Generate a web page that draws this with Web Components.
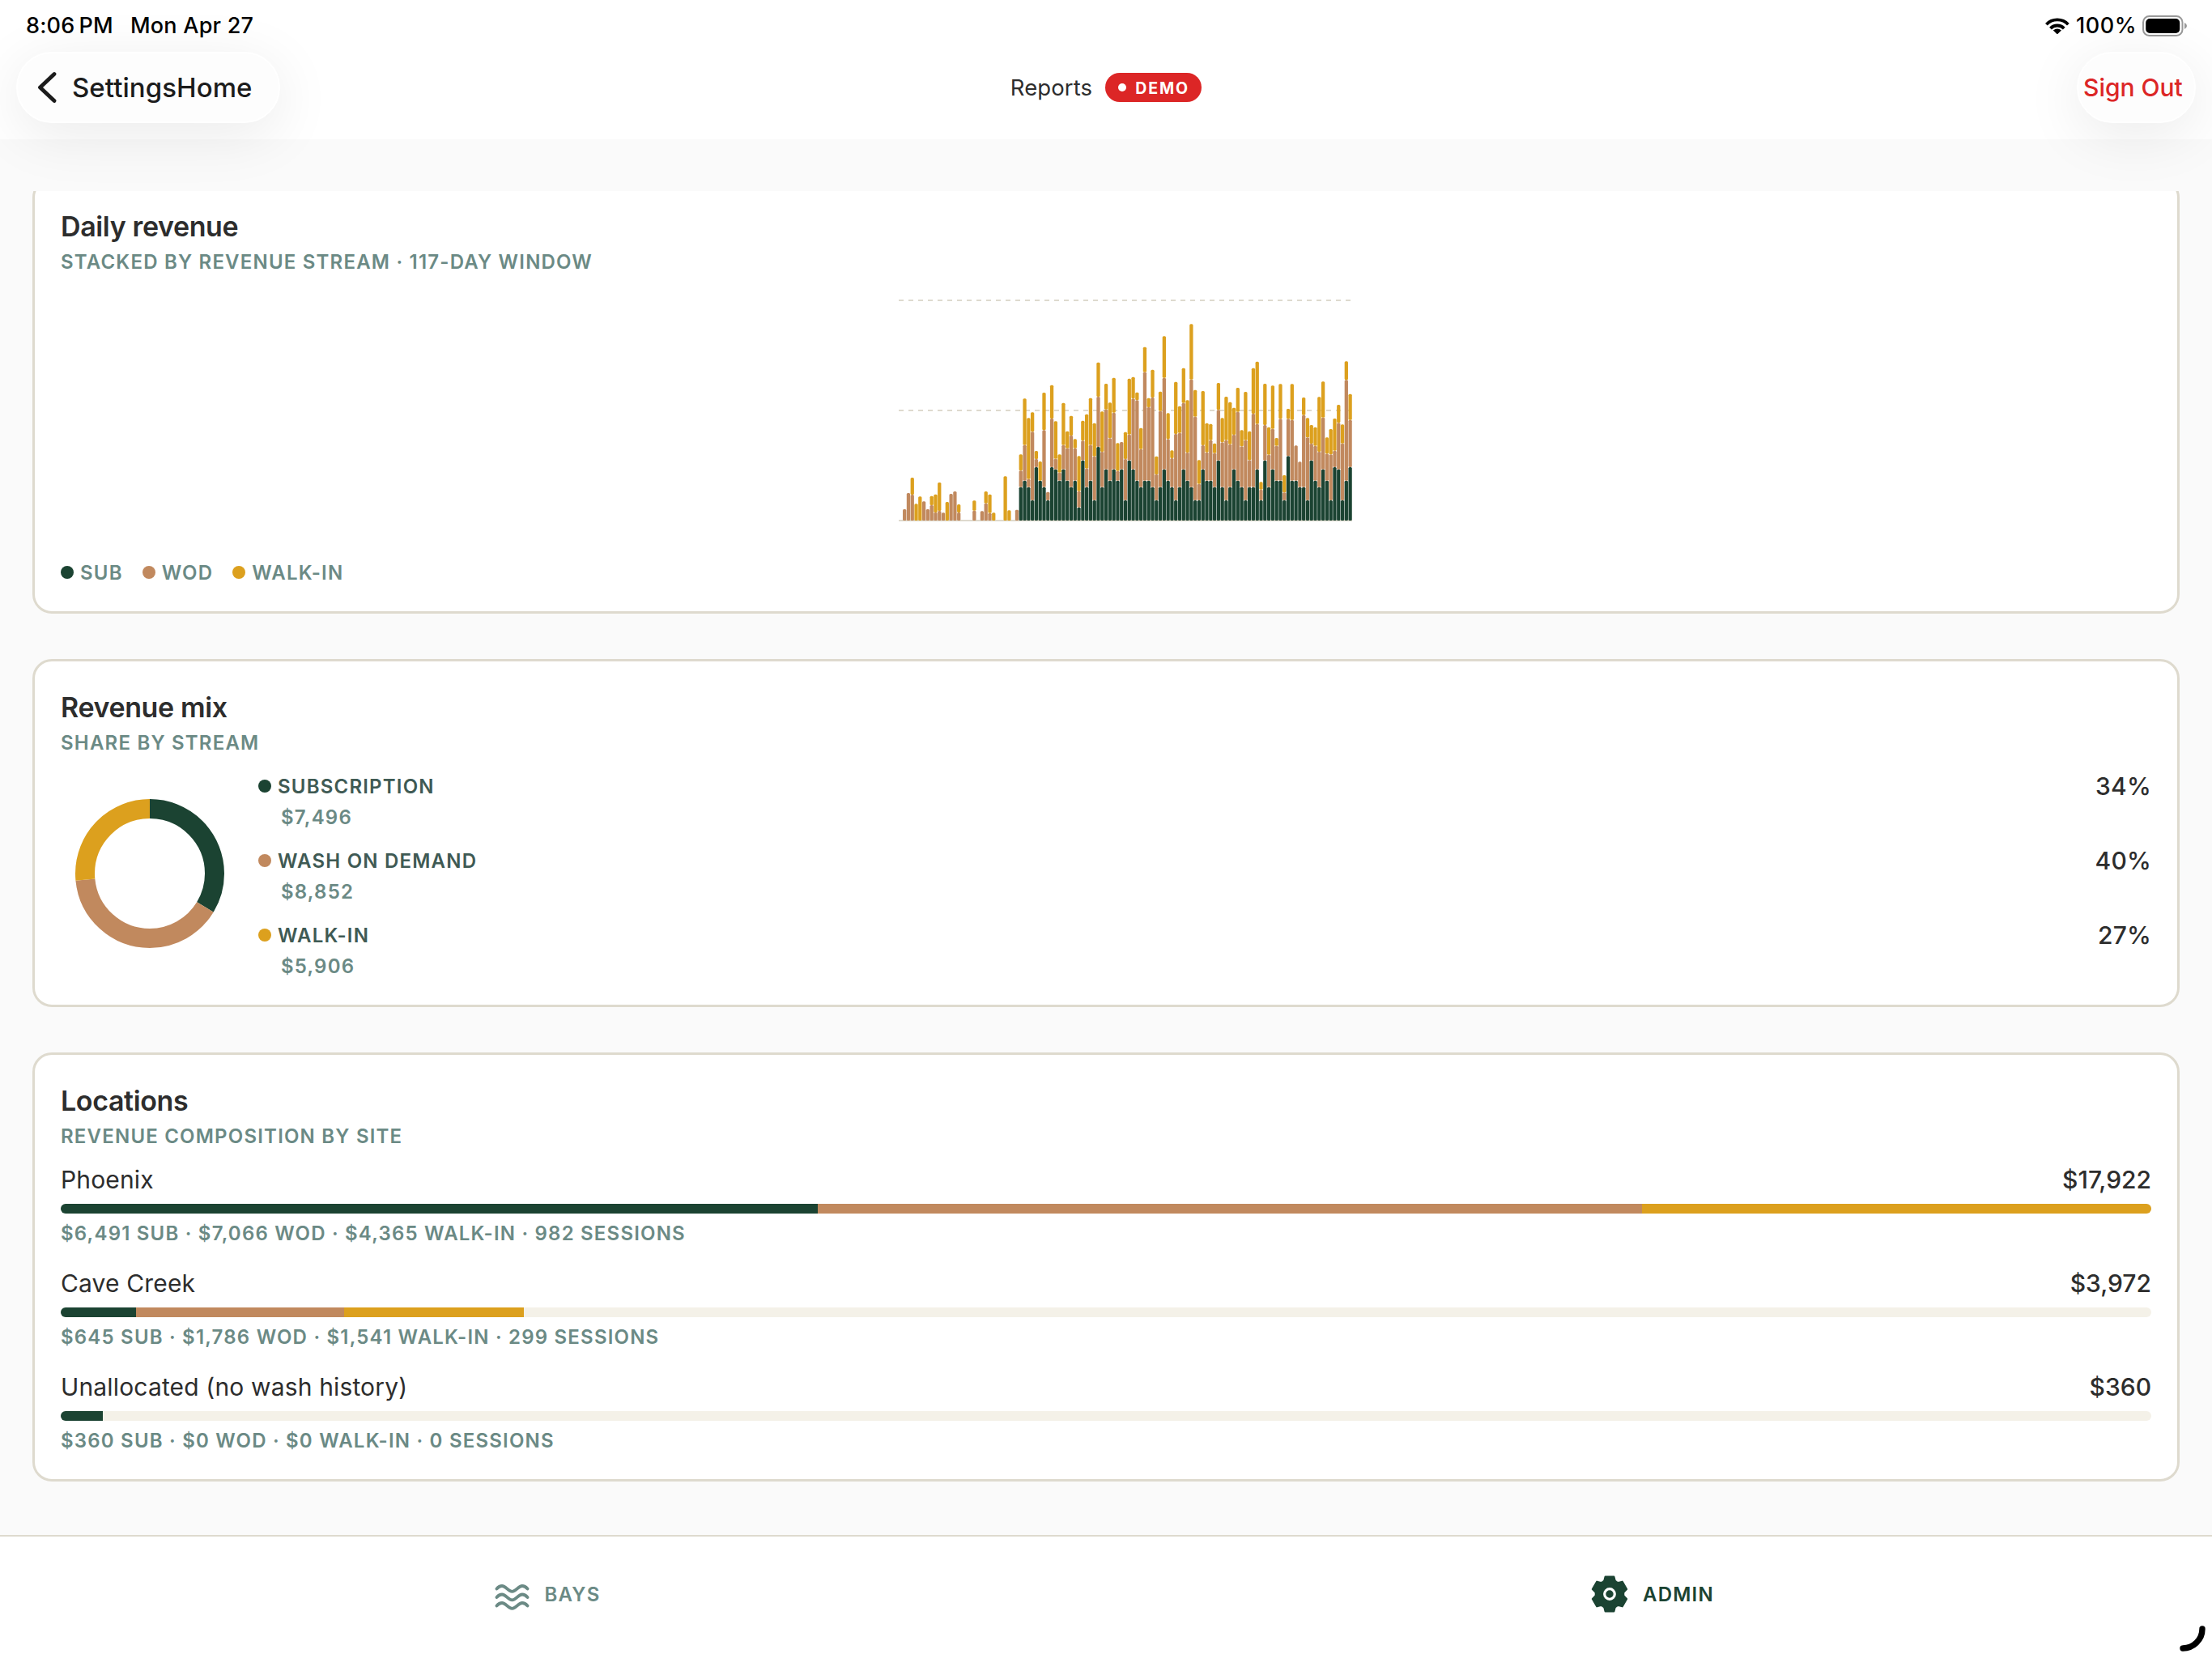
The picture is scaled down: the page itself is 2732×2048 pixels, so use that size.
<!DOCTYPE html>
<html lang="en">
<head>
<meta charset="utf-8">
<title>Reports</title>
<style>
  html, body { margin: 0; height: 100%; }
  body {
    font-family: Inter, "Liberation Sans", sans-serif;
    background: #fafafa;
    color: #2d2d2d;
    overflow: hidden;
    --sub: #1b4332;
    --wod: #c1895e;
    --walk: #dca01e;
    --line: #dedace;
    --muted: #6b8a85;
  }
</style>
</head>
<body>
<reports-app></reports-app>

<script>
const define = (name, html, setup) => {
  const template = document.createElement('template');
  template.innerHTML = html;
  customElements.define(name, class extends HTMLElement {
    constructor() {
      super();
      this.attachShadow({ mode: 'open' }).appendChild(template.content.cloneNode(true));
    }
    connectedCallback() {
      if (setup) setup(this, this.shadowRoot);
    }
  });
};

define('status-bar', `
  <style>
    :host {
      display: flex;
      justify-content: space-between;
      height: 64px;
      box-sizing: border-box;
      padding: 16px 30px 0 32px;
      font-size: 27px;
      line-height: 32px;
      font-weight: 500;
      color: #000;
    }
    .side { display: flex; }
    .time { letter-spacing: 0.2px; }
    .date { margin-left: 21px; letter-spacing: 0.25px; }
    .wifi { margin: 6px 8px 0 0; }
    .percent { letter-spacing: 0.5px; }
    .battery { margin: 3px 0 0 7px; }
    svg { display: block; }
  </style>
  <div class="side"><span class="time">8:06&#8202;&#8202;PM</span><span class="date">Mon Apr 27</span></div>
  <div class="side">
    <svg class="wifi" width="30" height="20" viewBox="0 0 30 20" fill="none" stroke="#000" stroke-width="3.8">
      <path d="M1.4 8.2A18.6 18.6 0 0 1 28.4 8.2"/>
      <path d="M6.5 13.1A11.6 11.6 0 0 1 23.3 13.1"/>
      <path d="M9.8 15.6Q14.9 11.6 20 15.6L14.9 20.4Z" fill="#000" stroke="none"/>
    </svg>
    <span class="percent">100%</span>
    <svg class="battery" width="56" height="26" viewBox="0 0 56 26">
      <rect x="1" y="1" width="48.5" height="24" rx="7.5" fill="none" stroke="#999" stroke-width="2"/>
      <rect x="4.2" y="4" width="42" height="18" rx="5" fill="#000"/>
      <path d="M52 9Q55 10.5 55 13Q55 15.500 52 17Z" fill="#999"/>
    </svg>
  </div>
`);

define('pill-button', `
  <style>
    :host {
      display: flex;
      align-items: center;
      height: 88px;
      box-sizing: border-box;
      border: 2px solid #fff;
      border-radius: 44px;
      background: #fdfdfd;
      box-shadow: 0 14px 72px rgba(0, 0, 0, 0.085);
      font-weight: 500;
      white-space: nowrap;
    }
  </style>
  <slot></slot>
`);

define('demo-badge', `
  <style>
    :host {
      display: flex;
      align-items: center;
      gap: 11px;
      height: 36px;
      width: 119px;
      box-sizing: border-box;
      padding-left: 16px;
      border-radius: 18px;
      background: #dc2626;
      color: #fff;
      font-size: 19.5px;
      line-height: 36px;
      font-weight: 650;
      letter-spacing: 1.9px;
    }
    i { width: 10px; height: 10px; border-radius: 50%; background: #fff; }
    span { padding-top: 1px; }
  </style>
  <i></i><span><slot></slot></span>
`);

define('nav-bar', `
  <style>
    :host {
      display: grid;
      grid-template-columns: 1fr auto 1fr;
      height: 108px;
      box-sizing: border-box;
      padding: 0 20px 20px;
    }
    .back { justify-self: start; width: 326px; padding-left: 24px; font-size: 33px; letter-spacing: 0.05px; color: #1c1c1c; }
    .back svg { margin-right: 19px; }
    .title { display: flex; align-items: center; gap: 16px; font-size: 27.5px; letter-spacing: 0.1px; }
    .out { justify-self: end; width: 147px; padding-left: 6px; font-size: 30px; color: #dc2626; }
  </style>
  <pill-button class="back">
    <svg width="24" height="40" viewBox="0 0 24 40" fill="none" stroke="#1c1c1c" stroke-width="4.8" stroke-linecap="round" stroke-linejoin="round">
      <path d="M21 3.500L3.500 20L21 36.500"/>
    </svg>
    <span>SettingsHome</span>
  </pill-button>
  <div class="title"><span>Reports</span><demo-badge>DEMO</demo-badge></div>
  <pill-button class="out"><span>Sign Out</span></pill-button>
`);

define('report-card', `
  <style>
    :host {
      display: block;
      box-sizing: border-box;
      padding: 32px;
      border: 3px solid var(--line);
      border-radius: 24px;
      background: #fff;
    }
    h2 { margin: 0; font-size: 34px; line-height: 50px; font-weight: 600; letter-spacing: -0.37px; }
    p {
      margin: 0;
      height: 36px;
      font-size: 24px;
      line-height: 38px;
      font-weight: 600;
      letter-spacing: 1.2px;
      text-transform: uppercase;
      color: var(--muted);
    }
  </style>
  <h2></h2><p></p>
  <slot></slot>
`, (el, root) => {
  root.querySelector('h2').textContent = el.getAttribute('heading');
  root.querySelector('p').textContent = el.getAttribute('caption');
});

define('color-key', `
  <style>
    :host {
      display: flex;
      align-items: center;
      gap: 8px;
      height: 32px;
      font-size: 24px;
      line-height: 32px;
      font-weight: 600;
      letter-spacing: 1.2px;
      color: var(--muted);
    }
    i { width: 16px; height: 16px; border-radius: 50%; background: var(--key); }
    span { padding-top: 2px; }
  </style>
  <i></i><span><slot></slot></span>
`);

// Tops of the stacked segments [sub, wod, walk-in] for each day, in chart
// units: 816 is the baseline, 0 the upper grid line. 0 = no segment.
const DAYS = [
  [0,0,0],[0,774,0],[0,714,0],[0,720,657],[0,0,754],[0,0,727],[0,745,0],[0,774,0],[0,759,725],[0,786,719],
  [0,780,675],[0,787,0],[0,0,747],[0,717,0],[0,708,0],[0,786,756],[0,0,0],[0,0,0],[0,0,0],[0,779,742],
  [0,0,0],[0,781,0],[0,752,708],[0,788,719],[0,0,787],[0,0,0],[0,0,0],[0,0,652],[0,0,778],[0,0,0],
  [0,776,0],[692,631,571],[668,536,364],[692,662,436],[741,487,415],[618,588,558],[668,0,597],[692,481,342],[741,710,0],[618,438,314],
  [626,587,448],[668,638,571],[626,536,380],[668,548,485],[692,501,428],[668,548,514],[767,707,577],[593,520,446],[692,623,422],[668,536,362],
  [741,578,455],[543,357,230],[692,561,412],[626,404,309],[668,511,379],[626,416,287],[668,632,529],[626,525,0],[741,588,488],[593,497,290],
  [626,364,284],[668,370,341],[692,551,473],[668,266,173],[668,396,362],[692,360,257],[741,645,578],[692,410,338],[626,287,133],[668,514,418],
  [692,585,556],[741,495,302],[692,491,392],[626,380,251],[668,564,370],[692,293,88],[741,431,332],[741,680,592],[626,537,336],[668,563,455],
  [668,518,458],[692,566,530],[593,406,306],[692,526,436],[741,518,357],[692,533,377],[626,498,398],[668,413,324],[692,541,481],[741,518,339],
  [692,592,485],[692,420,251],[626,458,227],[741,701,673],[593,462,309],[692,572,470],[626,476,316],[668,539,510],[668,439,310],[741,712,648],
  [577,439,402],[668,443,310],[668,538,0],[692,598,0],[692,425,360],[741,508,436],[593,531,462],[668,539,470],[692,561,358],[626,434,301],
  [668,568,508],[741,571,477],[618,557,438],[626,454,387],[741,530,460],[668,295,226],[618,443,347]
];

define('daily-chart', `
  <style>
    :host { display: flex; justify-content: center; height: 350px; }
    .sub { fill: var(--sub); }
    .wod { fill: var(--wod); }
    .walk { fill: var(--walk); }
    .grid { stroke: var(--line); stroke-width: 2; }
  </style>
  <svg width="608" height="350" viewBox="0 0 608 350">
    <g class="grid">
      <path d="M48 30H608M48 166H608" stroke-dasharray="6 6"/>
      <path d="M48 302H608"/>
    </g>
    <g id="bars"></g>
  </svg>
`, (el, root) => {
  const slot = 560 / DAYS.length;
  const width = 4.3;
  let bars = '';
  DAYS.forEach((tops, i) => {
    const x = 48 + i * slot + (slot - width) / 2;
    let bottom = 302;
    ['sub', 'wod', 'walk'].forEach((name, n) => {
      if (!tops[n]) return;
      const top = 30 + tops[n] / 3;
      bars += `<rect class="${name}" x="${x.toFixed(2)}" y="${top.toFixed(2)}" width="${width}" height="${(bottom - top).toFixed(2)}" rx="1.5"/>`;
      bottom = top;
    });
  });
  root.querySelector('#bars').innerHTML = bars;
});

define('mix-donut', `
  <style>
    :host { display: block; }
    svg { display: block; }
    circle { fill: none; stroke-width: 24; }
  </style>
  <svg width="220" height="220" viewBox="-110 -110 220 220"><g transform="rotate(-90)"></g></svg>
`, (el, root) => {
  const parts = [['sub', 7496], ['wod', 8852], ['walk', 5906]];
  const total = parts.reduce((sum, part) => sum + part[1], 0);
  let offset = 0;
  root.querySelector('g').innerHTML = parts.map(([name, value]) => {
    const share = value / total * 100;
    const arc = `<circle r="80" pathLength="100" style="stroke: var(--${name})" stroke-dasharray="${share} 100" stroke-dashoffset="${-offset}"/>`;
    offset += share;
    return arc;
  }).join('');
});

define('mix-row', `
  <style>
    :host { display: block; }
    .top { display: flex; align-items: center; justify-content: space-between; height: 44px; line-height: 44px; }
    color-key { color: #3f5a54; }
    .share { font-size: 30px; font-weight: 500; letter-spacing: 0.2px; }
    .amount {
      height: 32px;
      padding-left: 28px;
      font-size: 24px;
      line-height: 34px;
      font-weight: 600;
      letter-spacing: 1.2px;
      color: var(--muted);
    }
  </style>
  <div class="top"><color-key><slot></slot></color-key><span class="share"></span></div>
  <div class="amount"></div>
`, (el, root) => {
  root.querySelector('.share').textContent = el.getAttribute('share');
  root.querySelector('.amount').textContent = el.getAttribute('amount');
});

define('location-row', `
  <style>
    :host { display: block; }
    .top { display: flex; justify-content: space-between; font-size: 30px; line-height: 44px; }
    .name { letter-spacing: 0.15px; }
    .total { font-weight: 500; }
    .track { display: flex; height: 12px; margin: 8px 0; border-radius: 6px; overflow: hidden; background: #f4f1e8; }
    .detail {
      height: 32px;
      font-size: 24px;
      line-height: 34px;
      font-weight: 600;
      letter-spacing: 1.2px;
      color: var(--muted);
    }
  </style>
  <div class="top"><span class="name"><slot></slot></span><span class="total"></span></div>
  <div class="track"></div>
  <div class="detail"></div>
`, (el, root) => {
  const money = n => '$' + n.toLocaleString('en-US');
  const [sub, wod, walk] = ['sub', 'wod', 'walk'].map(name => Number(el.getAttribute(name)));
  root.querySelector('.total').textContent = money(sub + wod + walk);
  root.querySelector('.track').innerHTML = [['sub', sub], ['wod', wod], ['walk', walk]]
    .map(([name, value]) => `<div style="width: ${value / 17922 * 100}%; background: var(--${name})"></div>`).join('');
  root.querySelector('.detail').textContent =
    `${money(sub)} SUB · ${money(wod)} WOD · ${money(walk)} WALK-IN · ${el.getAttribute('sessions')} SESSIONS`;
});

define('tab-item', `
  <style>
    :host {
      flex: 1;
      display: flex;
      align-items: center;
      justify-content: center;
      gap: 13px;
      padding-right: 21px;
      font-size: 24px;
      line-height: 32px;
      font-weight: 600;
      letter-spacing: 1.2px;
    }
    .icon { display: flex; justify-content: center; width: 56px; }
    .label { padding-top: 2px; }
  </style>
  <span class="icon"><slot name="icon"></slot></span><span class="label"><slot></slot></span>
`);

define('tab-bar', `
  <style>
    :host {
      display: flex;
      height: 152px;
      box-sizing: border-box;
      padding-bottom: 8px;
      border-top: 2px solid var(--line);
      background: #fff;
    }
    .bays { color: var(--muted); }
    .admin { color: var(--sub); }
    svg { display: block; }
    .bays svg { padding-top: 7px; }
  </style>
  <tab-item class="bays">
    <svg slot="icon" width="44" height="36" viewBox="0 0 44 36" fill="none" stroke="currentColor" stroke-width="3.8" stroke-linecap="round">
      <path d="M3.500 7.500C5.500 5.200 7.500 4 10 4C15 4 17.500 10.800 22.500 10.800S30 4 35 4C37.500 4 39.500 5.200 41.500 7.500"/>
      <path d="M3.500 18C5.500 15.700 7.500 14.500 10 14.500C15 14.500 17.500 21.300 22.500 21.300S30 14.500 35 14.500C37.500 14.500 39.500 15.700 41.500 18"/>
      <path d="M3.500 28.500C5.500 26.200 7.500 25 10 25C15 25 17.500 31.800 22.500 31.800S30 25 35 25C37.500 25 39.500 26.200 41.500 28.500"/>
    </svg>
    BAYS
  </tab-item>
  <tab-item class="admin">
    <svg slot="icon" width="48" height="48" viewBox="-24 -24 48 48">
      <polygon id="gear" fill="currentColor" stroke="currentColor" stroke-width="2.400" stroke-linejoin="round"/>
      <circle r="6.300" fill="none" stroke="#fff" stroke-width="3.200"/>
    </svg>
    ADMIN
  </tab-item>
`, (el, root) => {
  const tooth = [[-6.6, -16.2], [-5.3, -21.2], [5.3, -21.2], [6.6, -16.2], [8.5, -14.7]];
  const points = [];
  for (let i = 0; i < 6; i++) {
    const a = i * Math.PI / 3;
    tooth.forEach(([x, y]) => {
      points.push(`${(x * Math.cos(a) - y * Math.sin(a)).toFixed(2)},${(x * Math.sin(a) + y * Math.cos(a)).toFixed(2)}`);
    });
  }
  root.querySelector('#gear').setAttribute('points', points.join(' '));
});

define('reports-app', `
  <style>
    :host { display: flex; flex-direction: column; height: 2048px; }
    header { height: 172px; background: #fff; margin-bottom: 64px; }
    main {
      flex: 1;
      min-height: 0;
      overflow: hidden;
      display: flex;
      flex-direction: column;
      gap: 56px;
      padding: 0 40px;
    }
    report-card { flex: none; }
    /* scrolled a little, the first card runs under the top edge */
    .daily { margin-top: -16px; }
    .legend { display: flex; gap: 24px; }
    .mix { display: flex; align-items: center; gap: 24px; margin-top: 14px; }
    .rows { flex: 1; display: flex; flex-direction: column; gap: 16px; }
    .sites { display: flex; flex-direction: column; gap: 24px; margin-top: 14px; }
    .sub { --key: var(--sub); }
    .wod { --key: var(--wod); }
    .walk { --key: var(--walk); }
    .pencil { position: absolute; left: 2688px; top: 2004px; }
  </style>
  <header>
    <status-bar></status-bar>
    <nav-bar></nav-bar>
  </header>
  <main>
    <report-card class="daily" heading="Daily revenue" caption="Stacked by revenue stream · 117-day window">
      <daily-chart></daily-chart>
      <div class="legend">
        <color-key class="sub">SUB</color-key>
        <color-key class="wod">WOD</color-key>
        <color-key class="walk">WALK-IN</color-key>
      </div>
    </report-card>
    <report-card heading="Revenue mix" caption="Share by stream">
      <div class="mix">
        <mix-donut></mix-donut>
        <div class="rows">
          <mix-row class="sub" share="34%" amount="$7,496">SUBSCRIPTION</mix-row>
          <mix-row class="wod" share="40%" amount="$8,852">WASH ON DEMAND</mix-row>
          <mix-row class="walk" share="27%" amount="$5,906">WALK-IN</mix-row>
        </div>
      </div>
    </report-card>
    <report-card heading="Locations" caption="Revenue composition by site">
      <div class="sites">
        <location-row sub="6491" wod="7066" walk="4365" sessions="982">Phoenix</location-row>
        <location-row sub="645" wod="1786" walk="1541" sessions="299">Cave Creek</location-row>
        <location-row sub="360" wod="0" walk="0" sessions="0">Unallocated (no wash history)</location-row>
      </div>
    </report-card>
  </main>
  <tab-bar></tab-bar>
  <svg class="pencil" width="40" height="40" viewBox="0 0 40 40" fill="none" stroke="#000" stroke-width="7.400" stroke-linecap="round">
    <path d="M8 32A24 24 0 0 0 32 8"/>
  </svg>
`);
</script>
</body>
</html>
